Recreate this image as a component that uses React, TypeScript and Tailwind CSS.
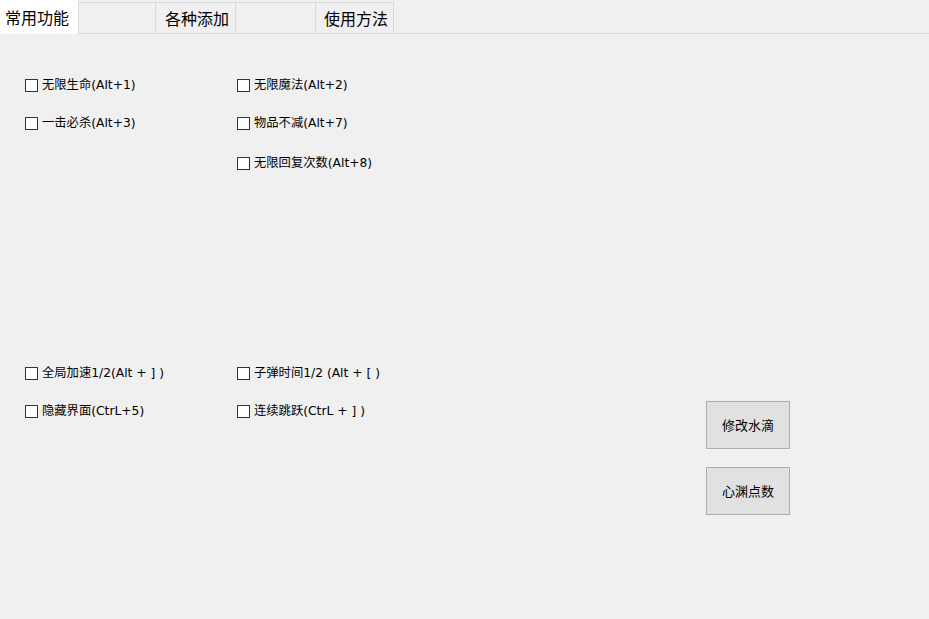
import React from "react";

const font = { fontFamily: '"Noto Sans CJK SC", "Noto Sans", sans-serif' };
const labelFont = { fontFamily: '"DejaVu Sans", "Noto Sans CJK SC", sans-serif' };

function Check({ label }: { label: string }) {
  return (
    <div className="flex h-[20px] items-center">
      <span className="box-border h-[13px] w-[13px] border border-[#333333] bg-white" />
      <span className="ml-[4px] text-[12.3px] leading-[20px] text-black" style={labelFont}>
        {label}
      </span>
    </div>
  );
}

export default function App() {
  const tabs = ["常用功能", "", "各种添加", "", "使用方法"];
  const widths = ["w-[78px]", "w-[78px]", "w-[80px]", "w-[80px]", "w-[78px]"];
  return (
    <div className="h-[619px] w-[929px] overflow-hidden bg-[#f0f0f0]" style={font}>
      <div className="flex h-[34px] border-b border-[#d9d9d9]">
        {tabs.map((t, i) =>
          i === 0 ? (
            <div
              key={i}
              className={`${widths[i]} relative -mb-px flex h-[34px] items-center justify-center bg-white pr-[4px] text-[16px] text-black`}
            >
              {t}
            </div>
          ) : (
            <div
              key={i}
              className={`${widths[i]} mt-[2px] box-border flex h-[31px] items-center justify-center border-t border-r border-[#d9d9d9] bg-[#f0f0f0] pl-[3px] text-[16px] text-black ${i === 1 ? "border-l" : ""}`}
            >
              {t}
            </div>
          )
        )}
      </div>
      <div className="px-[25px]">
        <div className="mt-[41px] grid w-[400px] grid-cols-[212px_1fr]">
          <div className="flex flex-col">
            <Check label="无限生命(Alt+1)" />
            <div className="h-[18px]" />
            <Check label="一击必杀(Alt+3)" />
          </div>
          <div className="flex flex-col">
            <Check label="无限魔法(Alt+2)" />
            <div className="h-[18px]" />
            <Check label="物品不减(Alt+7)" />
            <div className="h-[20px]" />
            <Check label="无限回复次数(Alt+8)" />
          </div>
        </div>
        <div className="mt-[190px] flex">
          <div className="grid w-[681px] grid-cols-[212px_1fr] content-start">
            <div className="flex flex-col">
              <Check label="全局加速1/2(Alt + ] )" />
              <div className="h-[18px]" />
              <Check label="隐藏界面(CtrL+5)" />
            </div>
            <div className="flex flex-col">
              <Check label="子弹时间1/2 (Alt + [ )" />
              <div className="h-[18px]" />
              <Check label="连续跳跃(CtrL + ] )" />
            </div>
          </div>
          <div className="mt-[38px] flex flex-col gap-[18px]">
            <button className="box-border h-[48px] w-[84px] border border-[#adadad] bg-[#e1e1e1] text-[13px] text-black">
              修改水滴
            </button>
            <button className="box-border h-[48px] w-[84px] border border-[#adadad] bg-[#e1e1e1] text-[13px] text-black">
              心渊点数
            </button>
          </div>
        </div>
      </div>
    </div>
  );
}
